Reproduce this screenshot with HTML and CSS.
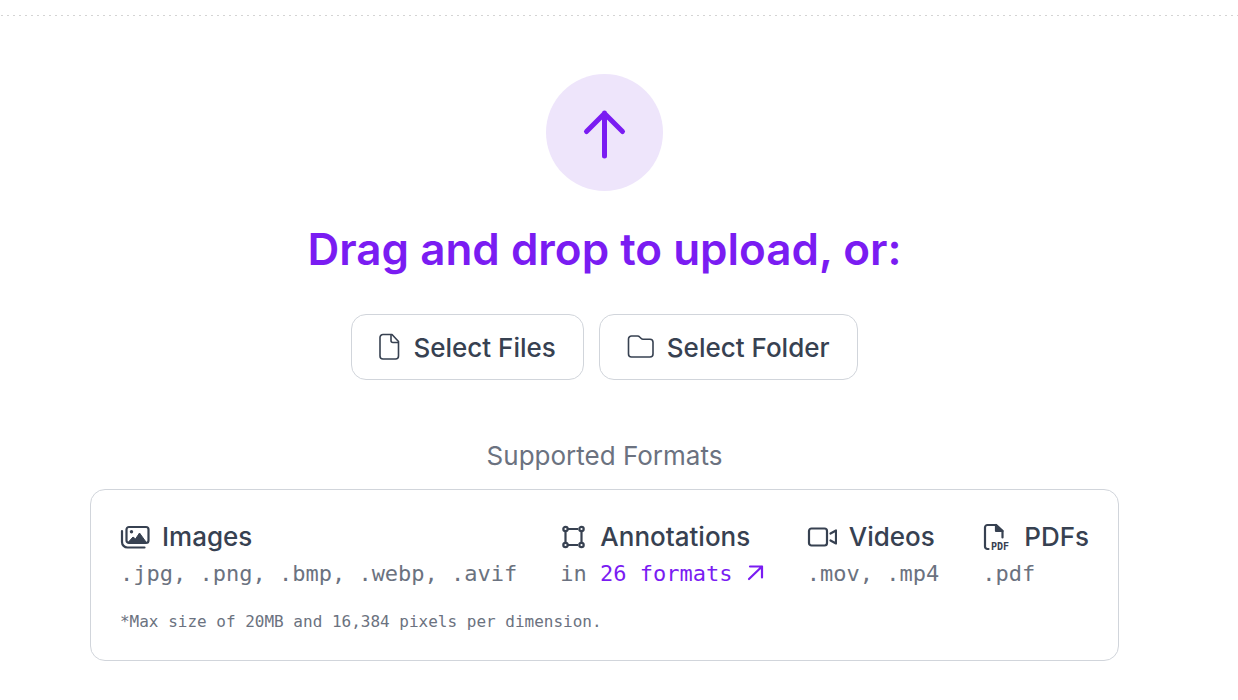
FILE: index.html
```
<!DOCTYPE html>
<html lang="en">
<head>
  <meta charset="UTF-8" />
  <meta name="viewport" content="width=device-width, initial-scale=1.0" />
  <title>Upload</title>
  <link rel="stylesheet" href="styles.css">
</head>
<body>
  <main class="dropzone">
    <div class="upload-icon">
      <svg width="48" height="54" viewBox="0 0 48 54" fill="none" stroke="currentColor" stroke-width="5" stroke-linecap="round" stroke-linejoin="round">
        <path d="M23.500 50V7M5.500 25.500L23.500 7.500l18 18" />
      </svg>
    </div>
    <h1>Drag and drop to upload, or:</h1>

    <div class="actions">
      <button type="button">
        <svg width="22" height="28" viewBox="0 0 22 28" fill="none" stroke="currentColor" stroke-width="1.6" stroke-linejoin="round">
          <path d="M4 1.5h9l6.500 7V23a3 3 0 0 1-3 3H4a3 3 0 0 1-3-3V4.500a3 3 0 0 1 3-3z" />
          <path d="M12 1.500v6a2 2 0 0 0 2 2h5.500" />
        </svg>
        Select Files
      </button>
      <button type="button">
        <svg width="28" height="28" viewBox="0 0 28 28" fill="none" stroke="currentColor" stroke-width="1.6" stroke-linejoin="round">
          <path d="M4.500 3h6c1 0 1.600.3 2.200 1l1.500 1.500c.5.500 1 .7 1.800.7h7a3 3 0 0 1 3 3V21a3 3 0 0 1-3 3h-18.500a3 3 0 0 1-3-3V6a3 3 0 0 1 3-3z" />
        </svg>
        Select Folder
      </button>
    </div>

    <h2>Supported Formats</h2>
    <section class="formats">
      <div class="columns">
        <div class="format">
          <h3>
            <svg width="30" height="28" viewBox="0 0 30 28" fill="none" stroke="currentColor" stroke-width="2.2" stroke-linecap="round" stroke-linejoin="round">
              <rect x="6.500" y="4" width="22" height="16" rx="2.500" />
              <path d="M2 8v11a5.500 5.500 0 0 0 5.500 5.500h17" />
              <circle cx="11.500" cy="8.800" r="1.700" fill="currentColor" stroke="none" />
              <path d="M8.500 19l4.500-5 2.500 2 4-6 6.500 9z" fill="currentColor" stroke-width="1" />
            </svg>
            Images
          </h3>
          <p>.jpg, .png, .bmp, .webp, .avif</p>
        </div>
        <div class="format">
          <h3>
            <svg width="28" height="28" viewBox="0 0 28 28" fill="none" stroke="currentColor" stroke-width="2.2">
              <path d="M8 6h10M8 22h10M5.500 8v12M21.500 8v12" />
              <circle cx="5.500" cy="6" r="2.200" />
              <circle cx="21.500" cy="6" r="2.200" />
              <circle cx="5.500" cy="22" r="2.200" />
              <circle cx="21.500" cy="22" r="2.200" />
            </svg>
            Annotations
          </h3>
          <p>in
            <a href="#formats">26 formats
              <svg width="18" height="18" viewBox="0 0 18 18" fill="none" stroke="currentColor" stroke-width="2.2" stroke-linecap="round" stroke-linejoin="round">
                <path d="M3 16L16 3.500M4 3.500h12V14.500" />
              </svg></a>
          </p>
        </div>
        <div class="format">
          <h3>
            <svg width="30" height="28" viewBox="0 0 30 28" fill="none" stroke="currentColor" stroke-width="2.2" stroke-linecap="round" stroke-linejoin="round">
              <rect x="2" y="5.500" width="18" height="17" rx="2.500" />
              <path d="M23.500 10.500l5.500-3v13l-5.500-3" />
            </svg>
            Videos
          </h3>
          <p>.mov, .mp4</p>
        </div>
        <div class="format">
          <h3>
            <svg width="30" height="28" viewBox="0 0 30 28" fill="none" stroke="currentColor" stroke-width="2.2" stroke-linecap="round" stroke-linejoin="round">
              <path d="M6.500 26H5.500a2.500 2.500 0 0 1-2.500-2.500V4.500A2.500 2.500 0 0 1 5.500 2H14l6.500 6v6.500" />
              <path d="M14 2v6h6.500z" fill="currentColor" />
              <text class="pdf-label" x="9" y="27">PDF</text>
            </svg>
            PDFs
          </h3>
          <p>.pdf</p>
        </div>
      </div>
      <p class="note">*Max size of 20MB and 16,384 pixels per dimension.</p>
    </section>
  </main>
</body>
</html>
```
FILE: styles.css
```
* {
  box-sizing: border-box;
}
body {
  margin: 0;
  padding-top: 15px;
  font-family: Inter, sans-serif;
  background: #ffffff;
  color: #374151;
}
h1, h2, h3, p {
  margin: 0;
}
svg {
  flex: none;
}
.dropzone {
  display: flex;
  flex-direction: column;
  align-items: center;
  padding: 59px 29px 39px 0;
  background: repeating-linear-gradient(90deg, transparent 0 1px, #d4d4d4 1px 3px, transparent 3px 6px) top / 100% 1px no-repeat;
}
.upload-icon {
  display: flex;
  align-items: center;
  justify-content: center;
  width: 117px;
  height: 117px;
  border-radius: 50%;
  background: #eee5fb;
  color: #7a1cf2;
}
h1 {
  margin-top: 32px;
  font-size: 44px;
  line-height: 52px;
  font-weight: 600;
  color: #7a1cf2;
}
.actions {
  display: flex;
  gap: 15px;
  margin-top: 39px;
}
button {
  display: flex;
  align-items: center;
  gap: 12px;
  height: 66px;
  padding: 0 27px;
  border: 1px solid #d1d5db;
  border-radius: 15px;
  background: #ffffff;
  color: #374151;
  font-family: inherit;
  font-size: 26px;
  font-weight: 500;
  cursor: pointer;
}
h2 {
  margin-top: 58px;
  font-size: 26px;
  line-height: 36px;
  font-weight: 400;
  color: #6b7280;
}
.formats {
  margin-top: 15px;
  padding: 29px 29px 27px;
  border: 1px solid #d1d5db;
  border-radius: 15px;
}
.columns {
  display: flex;
  gap: 43px;
}
h3 {
  display: flex;
  align-items: center;
  gap: 12px;
  font-size: 26px;
  line-height: 36px;
  font-weight: 500;
}
.format p {
  font-family: "DejaVu Sans Mono", monospace;
  font-size: 22px;
  line-height: 38px;
  color: #6b7280;
  white-space: nowrap;
}
.format a {
  color: #7a1cf2;
  text-decoration: none;
}
.pdf-label {
  font-family: "DejaVu Sans Mono", monospace;
  font-size: 10px;
  font-weight: 700;
  fill: currentColor;
  stroke: none;
}
.note {
  margin-top: 18px;
  font-family: "DejaVu Sans Mono", monospace;
  font-size: 16px;
  line-height: 22px;
  color: #6b7280;
}
```
